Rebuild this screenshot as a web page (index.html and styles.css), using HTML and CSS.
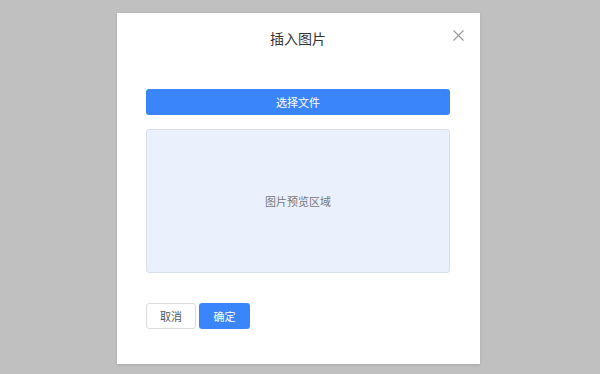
FILE: index.html
```html
<!DOCTYPE html>
<html lang="zh">
<head>
<meta charset="utf-8">
<link rel="stylesheet" href="styles.css">
</head>
<body>
<div class="modal">
  <div class="modal-header">
    <span class="title">插入图片</span>
    <button class="close" aria-label="关闭">
      <svg width="11" height="11" viewBox="0 0 11 11"><path d="M0.5 0.5 L10.5 10.5 M10.5 0.5 L0.5 10.5" stroke="#9a9a9a" stroke-width="1.2" fill="none"/></svg>
    </button>
  </div>
  <div class="modal-body">
    <button class="btn-select">选择文件</button>
    <div class="preview">图片预览区域</div>
  </div>
  <div class="modal-footer">
    <button class="btn btn-cancel">取消</button>
    <button class="btn btn-ok">确定</button>
  </div>
</div>
</body>
</html>
```
FILE: styles.css
```css
html, body {
  margin: 0;
  padding: 0;
  background: #c0c0c0;
  font-family: "Noto Sans CJK SC", "Noto Sans", sans-serif;
}
body {
  width: 600px;
  height: 374px;
  overflow: hidden;
  padding-top: 13px;
  box-sizing: border-box;
}
.modal {
  position: relative;
  margin-left: 117px;
  width: 363px;
  height: 351px;
  background: #fff;
  box-shadow: 0 1px 3px rgba(0,0,0,0.12);
  padding: 0 30px 0 29px;
  box-sizing: border-box;
}
.modal-header {
  height: 50px;
  display: flex;
  align-items: center;
  justify-content: center;
}
.title {
  font-size: 14px;
  color: #333;
  line-height: 1;
}
.close {
  position: absolute;
  top: 17px;
  right: 16px;
  width: 11px;
  height: 11px;
  padding: 0;
  border: 0;
  background: none;
  display: flex;
}
.modal-body {
  padding-top: 26px;
  display: flex;
  flex-direction: column;
  gap: 14px;
}
.btn-select {
  height: 26px;
  border: 0;
  border-radius: 3px;
  background: #3b85fa;
  color: #fff;
  font-family: inherit;
  font-size: 11px;
  padding: 0;
}
.preview {
  height: 144px;
  box-sizing: border-box;
  background: #eaf1fd;
  border: 1px solid #d8dfea;
  border-radius: 3px;
  display: flex;
  align-items: center;
  justify-content: center;
  font-size: 11px;
  color: #777;
}
.modal-footer {
  padding-top: 30px;
  display: flex;
  gap: 3px;
}
.btn {
  height: 26px;
  border-radius: 3px;
  font-family: inherit;
  font-size: 11px;
  padding: 0;
  box-sizing: border-box;
}
.btn-cancel {
  width: 50px;
  background: #fff;
  border: 1px solid #dcdcdc;
  color: #555;
}
.btn-ok {
  width: 51px;
  background: #3b85fa;
  border: 0;
  color: #fff;
}
```
